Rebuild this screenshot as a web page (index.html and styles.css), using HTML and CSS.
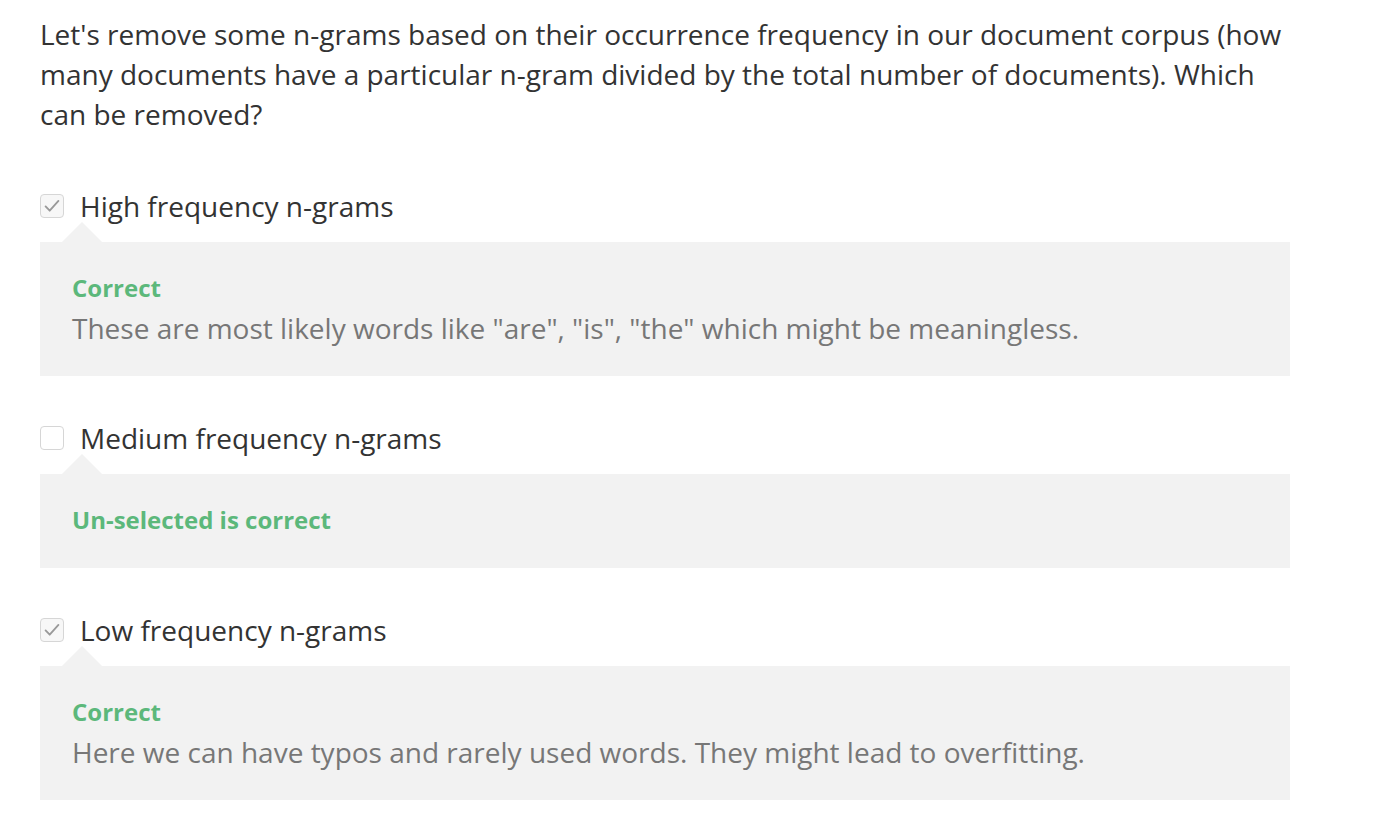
FILE: index.html
```html
<!DOCTYPE html>
<html>
<head>
<meta charset="utf-8">
<link rel="stylesheet" href="styles.css">
</head>
<body>
<div class="quiz">
  <p class="question">Let's remove some n-grams based on their occurrence frequency in our document corpus (how many documents have a particular n-gram divided by the total number of documents). Which can be removed?</p>

  <div class="option">
    <div class="option-row">
      <span class="checkbox checked"><svg viewBox="0 0 24 24" width="22" height="22"><path d="M5 12.5l4.5 4.6L19 6.5" fill="none" stroke="#999999" stroke-width="2" stroke-linecap="round" stroke-linejoin="round"/></svg></span>
      <span class="label">High frequency n-grams</span>
    </div>
    <div class="feedback">
      <div class="verdict">Correct</div>
      <div class="explain">These are most likely words like "are", "is", "the" which might be meaningless.</div>
    </div>
  </div>

  <div class="option">
    <div class="option-row">
      <span class="checkbox"></span>
      <span class="label">Medium frequency n-grams</span>
    </div>
    <div class="feedback">
      <div class="verdict">Un-selected is correct</div>
    </div>
  </div>

  <div class="option">
    <div class="option-row">
      <span class="checkbox checked"><svg viewBox="0 0 24 24" width="22" height="22"><path d="M5 12.5l4.5 4.6L19 6.5" fill="none" stroke="#999999" stroke-width="2" stroke-linecap="round" stroke-linejoin="round"/></svg></span>
      <span class="label">Low frequency n-grams</span>
    </div>
    <div class="feedback">
      <div class="verdict">Correct</div>
      <div class="explain">Here we can have typos and rarely used words. They might lead to overfitting.</div>
    </div>
  </div>
</div>
</body>
</html>
```
FILE: styles.css
```css
html, body {
  margin: 0;
  padding: 0;
  background: #ffffff;
}
body {
  font-family: "Open Sans", "Liberation Sans", sans-serif;
  color: #333333;
}
.quiz {
  width: 1250px;
  padding: 14px 0 0 40px;
}
.question {
  margin: 0 0 52px 0;
  width: 1262px;
  font-size: 28px;
  line-height: 40px;
}
.option {
  margin-bottom: 42px;
}
.option-row {
  display: flex;
  align-items: center;
  gap: 16px;
  height: 40px;
}
.checkbox {
  box-sizing: border-box;
  width: 24px;
  height: 24px;
  border: 1px solid #d6d6d6;
  border-radius: 4px;
  background: #ffffff;
  display: flex;
  align-items: center;
  justify-content: center;
  flex: none;
}
.checkbox.checked {
  background: #f7f7f7;
}
.checkbox svg {
  display: block;
}
.label {
  font-size: 28px;
  line-height: 40px;
}
.feedback {
  position: relative;
  margin-top: 16px;
  background: #f2f2f2;
  padding: 28px 32px;
}
.feedback::before {
  content: "";
  position: absolute;
  left: 22px;
  top: -20px;
  width: 0;
  height: 0;
  border-left: 20px solid transparent;
  border-right: 20px solid transparent;
  border-bottom: 20px solid #f2f2f2;
}
.verdict {
  font-size: 24px;
  line-height: 35px;
  margin-bottom: 3px;
  font-weight: 700;
  color: #5cb87b;
}
.explain {
  font-size: 28px;
  line-height: 40px;
  color: #777777;
}
```
